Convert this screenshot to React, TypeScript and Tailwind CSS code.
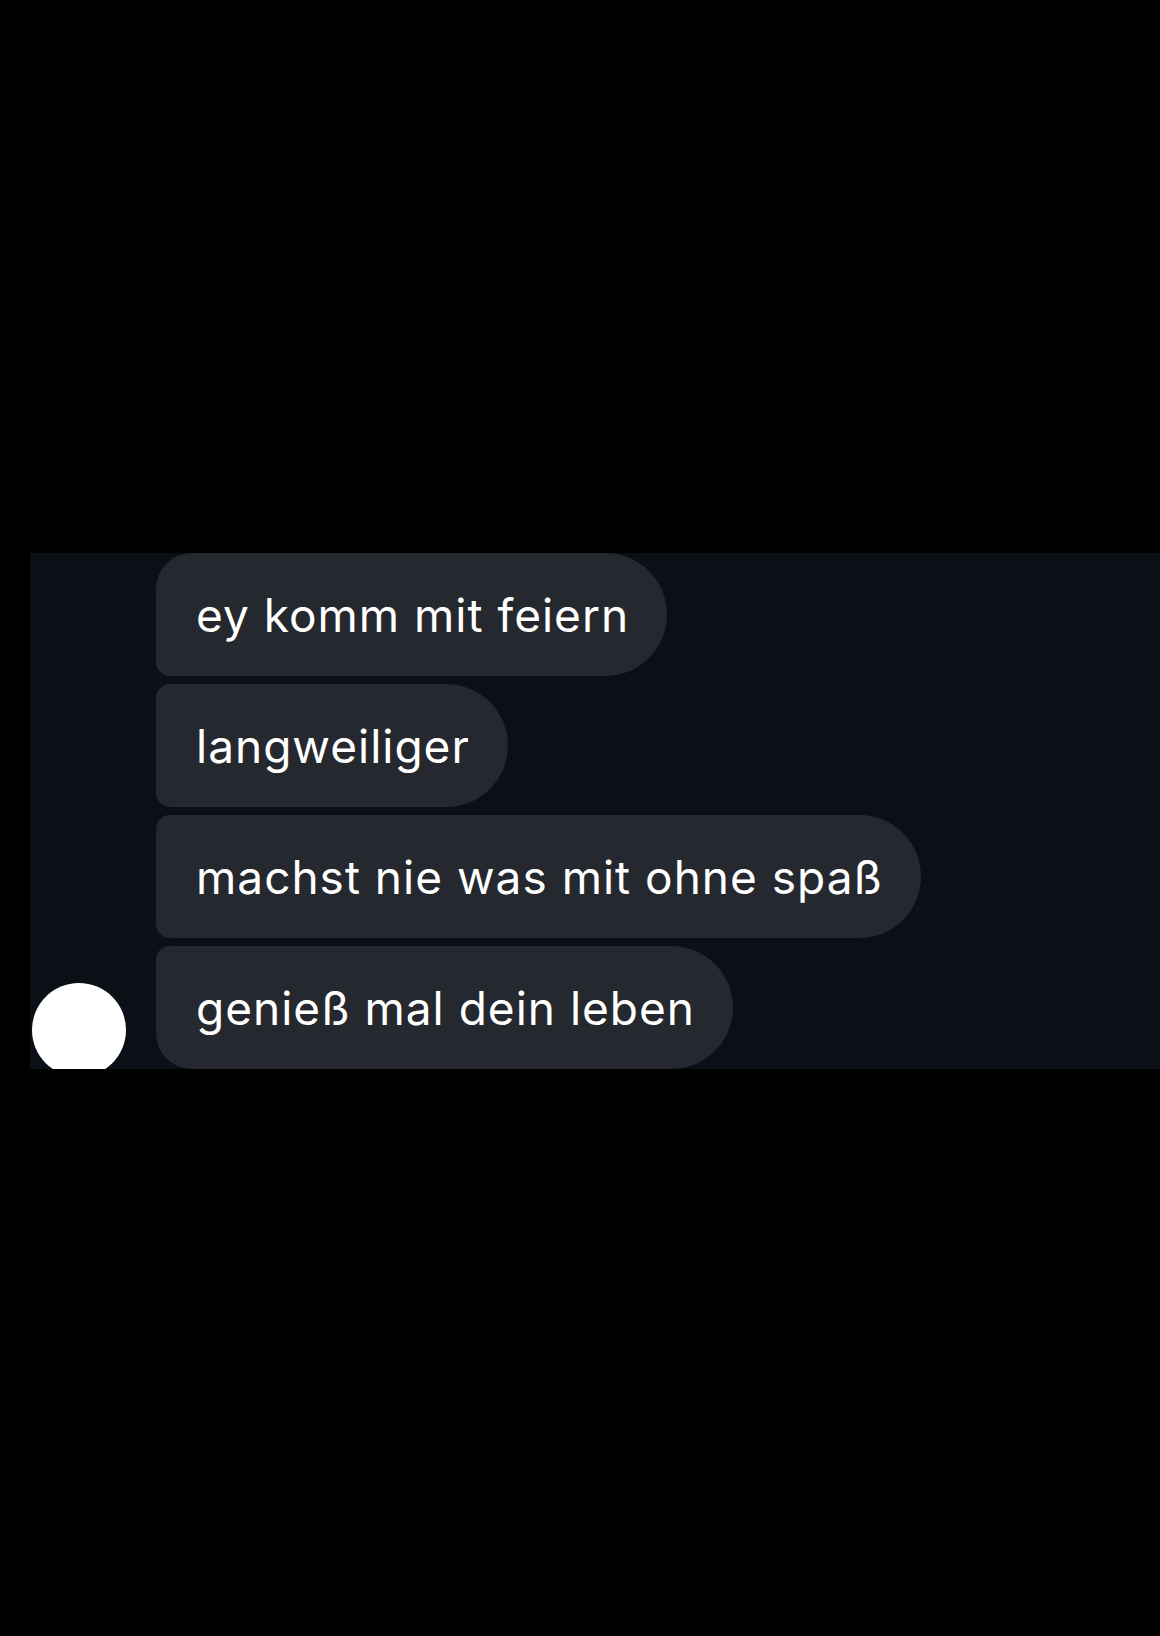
const messages = [
  { text: 'ey komm mit feiern', corners: 'rounded-tl-[36px] rounded-bl-[14px]' },
  { text: 'langweiliger', corners: 'rounded-tl-[14px] rounded-bl-[14px]' },
  { text: 'machst nie was mit ohne spaß', corners: 'rounded-tl-[14px] rounded-bl-[14px]' },
  { text: 'genieß mal dein leben', corners: 'rounded-tl-[14px] rounded-bl-[36px]' },
]

export default function App() {
  return (
    <div className="w-[1160px] h-[1636px] bg-black overflow-hidden pt-[553px] font-['Inter',sans-serif]">
      <div className="ml-[30px] h-[516px] bg-[#0b1017] overflow-hidden flex items-end">
        {/* avatar */}
        <div className="ml-[2px] mb-[-8px] w-[94px] h-[94px] rounded-full bg-white shrink-0" />

        <div className="ml-[30px] flex flex-col items-start gap-[8px]">
          {messages.map((m, i) => (
            <div
              key={i}
              className={`h-[123px] flex items-center pl-[40px] pr-[38px] bg-[#25282e] text-white text-[46px] leading-none tracking-[1px] rounded-r-[62px] ${m.corners}`}
            >
              {m.text}
            </div>
          ))}
        </div>
      </div>
    </div>
  )
}
